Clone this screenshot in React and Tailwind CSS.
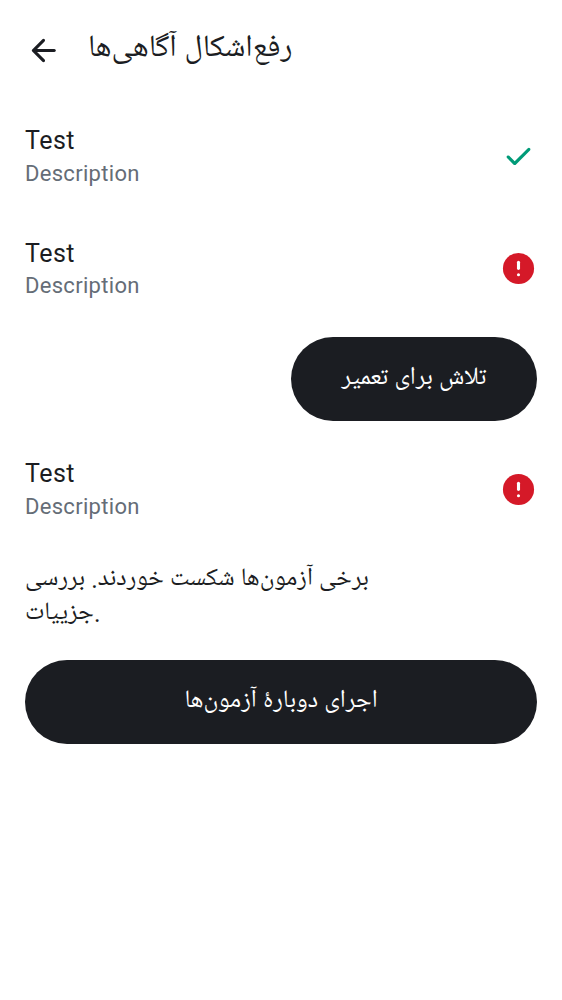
const Err = () => (
  <svg className="block size-[37px]" viewBox="0 0 24 24">
    <circle cx="12" cy="12" r="10.1" fill="#D51928" />
    <path d="M12 8v3.9" stroke="#fff" strokeWidth="2" strokeLinecap="round" />
    <circle cx="12" cy="16" r="1" fill="#fff" />
  </svg>
);
const Check = () => (
  <svg className="block size-[37px]" viewBox="0 0 24 24" fill="#009B78">
    <path d="M9.55 17.58q-.2 0-.375-.063a.9.9 0 0 1-.325-.212L4.55 13q-.274-.274-.263-.713.012-.437.288-.712a.95.95 0 0 1 .7-.275q.425 0 .7.275L9.55 15.15l8.475-8.475q.274-.275.713-.275.437 0 .712.275.275.274.275.712 0 .438-.275.713l-9.2 9.2q-.15.15-.325.212a1.1 1.1 0 0 1-.375.063" />
  </svg>
);
const Back = () => (
  <svg className="size-[37px]" viewBox="0 0 24 24" fill="#1b1d22">
    <path d="m7.825 13 4.9 4.9q.3.3.287.7-.012.4-.312.7-.3.275-.7.288-.4.012-.7-.288l-6.6-6.6a.9.9 0 0 1-.213-.325A1.1 1.1 0 0 1 4.425 12q0-.2.062-.375a.9.9 0 0 1 .213-.325l6.6-6.6q.275-.275.688-.275.412 0 .712.275.3.3.3.713 0 .412-.3.712L7.825 11H19q.425 0 .713.287.287.288.287.713t-.287.713A.97.97 0 0 1 19 13z" />
  </svg>
);
function Row({ icon }) {
  return (
    <div className="flex h-[62px] items-center justify-between">
      <div>
        <div className="h-[34.5px] text-[25px] leading-[35px] tracking-[0.5px] text-[#1b1d22]">Test</div>
        <div className="h-[31px] text-[22px] leading-[31px] tracking-[0.3px] text-[#656d77]">Description</div>
      </div>
      {icon}
    </div>
  );
}
export default function App() {
  return (
    <div className="h-[1000px] w-full bg-white px-[25px] font-[Roboto,'Noto_Naskh_Arabic_UI','Noto_Naskh_Arabic','DejaVu_Sans',sans-serif] text-[#1b1d22]">
      <header className="flex h-[100px] items-center gap-[26px]">
        <Back />
        <h1 dir="rtl" className="text-[31px] leading-[50px]">رفع‌اشکال آگاهی‌ها</h1>
      </header>
      <div className="mt-[25px]"><Row icon={<Check />} /></div>
      <div className="mt-[50.25px]"><Row icon={<Err />} /></div>
      <div className="mt-[38px] flex justify-end">
        <button dir="rtl" className="h-[83.5px] w-[246px] rounded-full bg-[#1b1d22] text-[25px] leading-[38px] text-white">تلاش برای تعمیر</button>
      </div>
      <div className="mt-[37.25px]"><Row icon={<Err />} /></div>
      <div className="mt-[43px] text-[24.9px] leading-[34px]">
        <p>برخی آزمون‌ها شکست خوردند. بررسی</p>
        <p>جزییات.</p>
      </div>
      <button dir="rtl" className="mt-[29px] h-[84px] w-full rounded-full bg-[#1b1d22] text-[25px] leading-[38px] text-white">اجرای دوبارهٔ آزمون‌ها</button>
    </div>
  );
}
